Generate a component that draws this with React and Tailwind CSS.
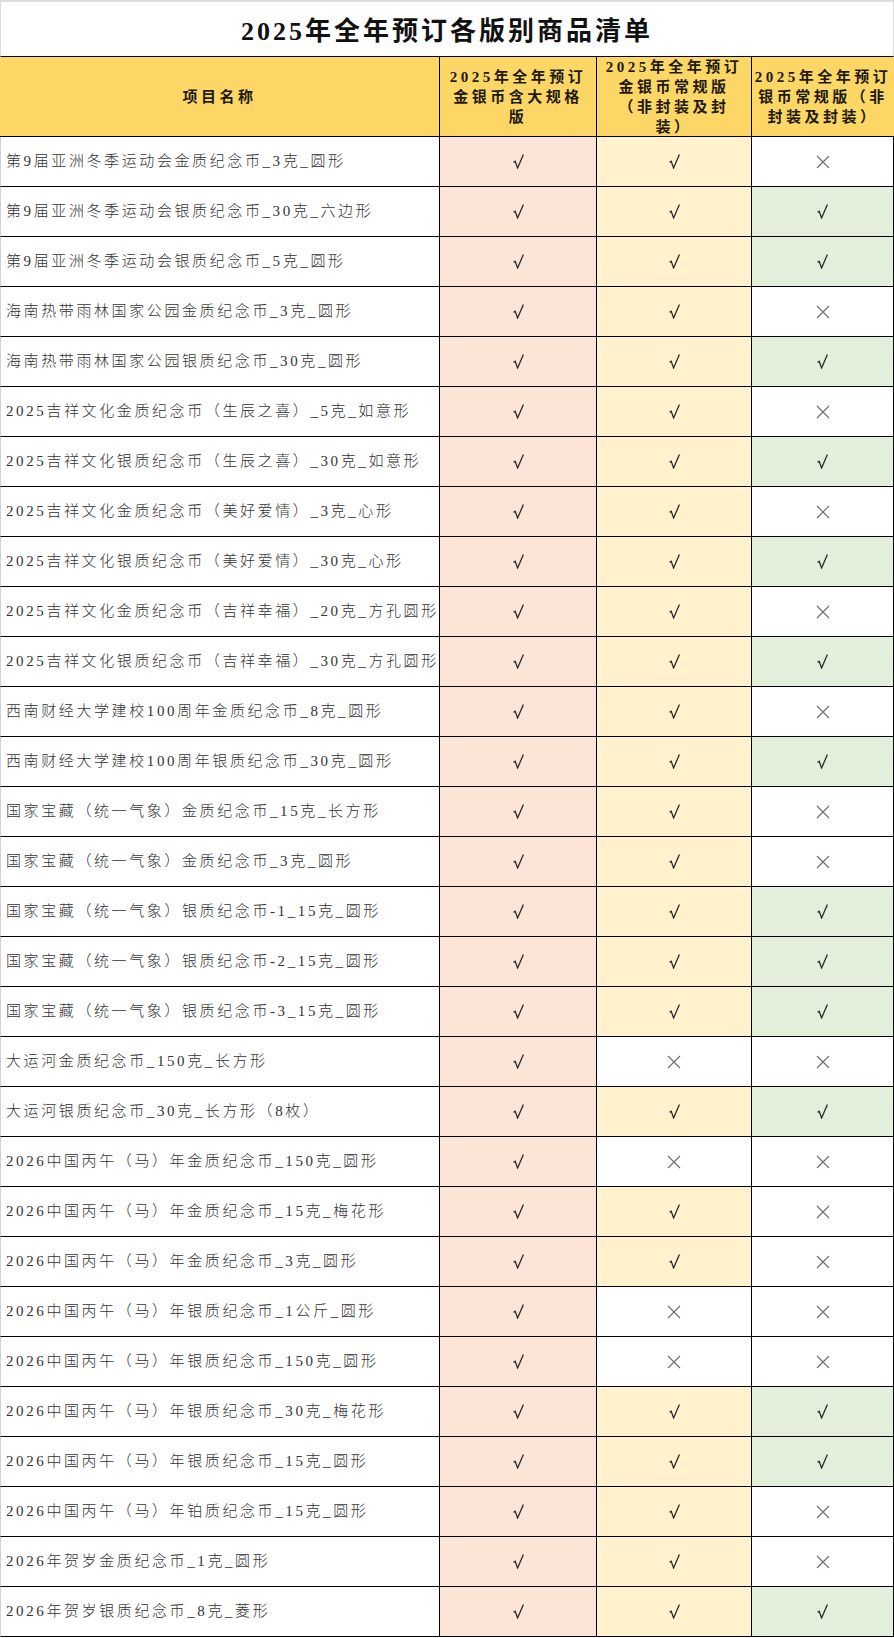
import React from "react";

const SERIF = { fontFamily: '"Liberation Serif", "Noto Sans CJK SC", serif' };

// [name, col3, col4] — col2 is always ✓
const ROWS = [
  ["第9届亚洲冬季运动会金质纪念币_3克_圆形", 1, 0],
  ["第9届亚洲冬季运动会银质纪念币_30克_六边形", 1, 1],
  ["第9届亚洲冬季运动会银质纪念币_5克_圆形", 1, 1],
  ["海南热带雨林国家公园金质纪念币_3克_圆形", 1, 0],
  ["海南热带雨林国家公园银质纪念币_30克_圆形", 1, 1],
  ["2025吉祥文化金质纪念币（生辰之喜）_5克_如意形", 1, 0],
  ["2025吉祥文化银质纪念币（生辰之喜）_30克_如意形", 1, 1],
  ["2025吉祥文化金质纪念币（美好爱情）_3克_心形", 1, 0],
  ["2025吉祥文化银质纪念币（美好爱情）_30克_心形", 1, 1],
  ["2025吉祥文化金质纪念币（吉祥幸福）_20克_方孔圆形", 1, 0],
  ["2025吉祥文化银质纪念币（吉祥幸福）_30克_方孔圆形", 1, 1],
  ["西南财经大学建校100周年金质纪念币_8克_圆形", 1, 0],
  ["西南财经大学建校100周年银质纪念币_30克_圆形", 1, 1],
  ["国家宝藏（统一气象）金质纪念币_15克_长方形", 1, 0],
  ["国家宝藏（统一气象）金质纪念币_3克_圆形", 1, 0],
  ["国家宝藏（统一气象）银质纪念币-1_15克_圆形", 1, 1],
  ["国家宝藏（统一气象）银质纪念币-2_15克_圆形", 1, 1],
  ["国家宝藏（统一气象）银质纪念币-3_15克_圆形", 1, 1],
  ["大运河金质纪念币_150克_长方形", 0, 0],
  ["大运河银质纪念币_30克_长方形（8枚）", 1, 1],
  ["2026中国丙午（马）年金质纪念币_150克_圆形", 0, 0],
  ["2026中国丙午（马）年金质纪念币_15克_梅花形", 1, 0],
  ["2026中国丙午（马）年金质纪念币_3克_圆形", 1, 0],
  ["2026中国丙午（马）年银质纪念币_1公斤_圆形", 0, 0],
  ["2026中国丙午（马）年银质纪念币_150克_圆形", 0, 0],
  ["2026中国丙午（马）年银质纪念币_30克_梅花形", 1, 1],
  ["2026中国丙午（马）年银质纪念币_15克_圆形", 1, 1],
  ["2026中国丙午（马）年铂质纪念币_15克_圆形", 1, 0],
  ["2026年贺岁金质纪念币_1克_圆形", 1, 0],
  ["2026年贺岁银质纪念币_8克_菱形", 1, 1],
];

const Check = () => (
  <svg width="11" height="15" viewBox="0 0 11 15" fill="none">
    <path d="M0.6 8.4 L2.2 7.3 L4.6 14 L10.4 0.6" stroke="#2b2b2b" strokeWidth="1.3" strokeLinejoin="miter" />
  </svg>
);

const Cross = () => (
  <svg width="14" height="14" viewBox="0 0 14 14" fill="none">
    <path d="M1 1 L13 13 M13 1 L1 13" stroke="#6b6b6b" strokeWidth="1.1" />
  </svg>
);

const MarkCell = ({ on, bg }) => (
  <div
    className={`h-[50px] flex items-center justify-center border-r border-b border-black ${on ? bg : "bg-white"}`}
  >
    {on ? <Check /> : <Cross />}
  </div>
);

const HeadCell = ({ lines, last }) => (
  <div
    className={`h-[80px] flex flex-col items-center justify-center bg-[#fdd766] border-b border-black ${last ? "" : "border-r"} text-[15px] leading-[20px] font-bold tracking-[3.5px] text-[#1f1a10] text-center`}
    style={SERIF}
  >
    {lines.map(l => (
      <span key={l} className="whitespace-nowrap">{l}</span>
    ))}
  </div>
);

export default function App() {
  return (
    <div className="w-[894px] bg-white" style={SERIF}>
      <div className="h-[57px] flex items-center justify-center pt-1 border-t-2 border-x border-t-[#dcdcdc] border-x-[#dcdcdc] border-b border-b-black">
        <h1 className="text-[26px] font-bold tracking-[3px] text-[#111]">2025年全年预订各版别商品清单</h1>
      </div>

      <div className="grid grid-cols-[440px_157px_155px_142px]">
        <HeadCell lines={["项目名称"]} />
        <HeadCell lines={["2025年全年预订", "金银币含大规格", "版"]} />
        <HeadCell lines={["2025年全年预订", "金银币常规版", "（非封装及封", "装）"]} />
        <HeadCell lines={["2025年全年预订", "银币常规版（非", "封装及封装）"]} last />

        {ROWS.map(([name, c3, c4]) => (
          <React.Fragment key={name}>
            <div className="h-[50px] flex items-center pl-[5px] border-l border-l-[#d0d0d0] border-r border-b border-black overflow-hidden">
              <span className="whitespace-nowrap text-[15px] font-light tracking-[2.6px] text-[#333]">{name}</span>
            </div>
            <MarkCell on bg="bg-[#fce4d6]" />
            <MarkCell on={c3} bg="bg-[#fff2cc]" />
            <MarkCell on={c4} bg="bg-[#e2efda]" />
          </React.Fragment>
        ))}
      </div>
    </div>
  );
}
